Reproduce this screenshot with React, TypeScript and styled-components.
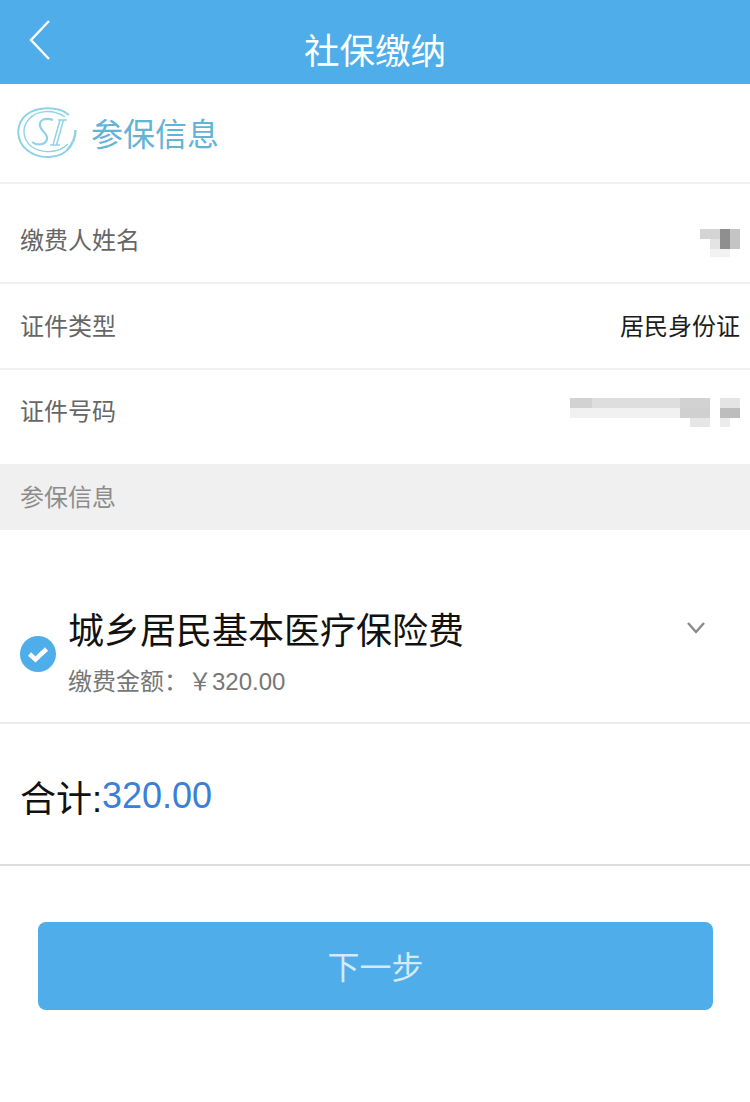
import styled, { createGlobalStyle } from "styled-components";

const GlobalStyle = createGlobalStyle`
  html, body {
    margin: 0;
    padding: 0;
    background: #fff;
  }
  body {
    font-family: "Liberation Sans", "Noto Sans CJK SC", sans-serif;
  }
`;

const Page = styled.div`
  width: 750px;
  height: 1102px;
  overflow: hidden;
  background: #fff;
`;

const Header = styled.header`
  position: relative;
  display: flex;
  align-items: center;
  justify-content: center;
  height: 84px;
  padding-top: 20px;
  box-sizing: border-box;
  background: #4fade9;
`;

const BackIcon = styled.svg`
  position: absolute;
  left: 28px;
  top: 19px;
`;

const Title = styled.h1`
  margin: 0;
  font-size: 35.5px;
  line-height: 40px;
  font-weight: 400;
  color: #fff;
`;

const Brand = styled.div`
  display: flex;
  align-items: center;
  gap: 14px;
  height: 100px;
  padding-left: 17px;
  box-sizing: border-box;
  border-bottom: 2px solid #f0f0f0;
`;

const BrandName = styled.span`
  font-size: 32px;
  color: #62b3d6;
  margin-bottom: 3px;
`;

const Row = styled.div<{ $height: number; $shift: number }>`
  display: flex;
  align-items: center;
  justify-content: space-between;
  height: ${(p) => p.$height}px;
  padding: ${(p) => Math.max(p.$shift, 0)}px 10px ${(p) => Math.max(-p.$shift, 0)}px 20px;
  box-sizing: border-box;
  border-bottom: 2px solid #f0f0f0;
`;

const Label = styled.span`
  font-size: 24px;
  color: #666;
`;

const Value = styled.span`
  font-size: 24px;
  color: #1c1c1c;
`;

const Blurred = styled.svg`
  margin-top: 9px;
  filter: blur(0.6px);
`;

const SectionBand = styled.div`
  display: flex;
  align-items: center;
  height: 64px;
  padding: 0 0 6px 20px;
  box-sizing: border-box;
  background: #f0f0f0;
  font-size: 24px;
  color: #8c8c8c;
`;

const Item = styled.div`
  display: flex;
  align-items: flex-start;
  height: 194px;
  padding: 77px 44px 0 20px;
  box-sizing: border-box;
  border-bottom: 2px solid #ececec;
`;

const CheckIcon = styled.svg`
  flex: none;
  margin-top: 29px;
`;

const ItemBody = styled.div`
  flex: 1;
  margin-left: 12px;
`;

const ItemName = styled.div`
  font-size: 36px;
  line-height: 50px;
  color: #111;
`;

const ItemPrice = styled.div`
  margin-top: 8px;
  font-size: 24px;
  line-height: 34px;
  color: #777;
`;

const Chevron = styled.svg`
  flex: none;
  margin-top: 14px;
`;

const Total = styled.div`
  display: flex;
  align-items: center;
  height: 142px;
  padding: 4px 0 0 20px;
  box-sizing: border-box;
  border-bottom: 2px solid #dedede;
  font-size: 36px;
  color: #111;
`;

const Amount = styled.span`
  color: #3a80d6;
`;

const NextButton = styled.button`
  display: block;
  width: 675px;
  height: 88px;
  margin: 56px 0 0 38px;
  padding: 0 0 2px;
  border: 0;
  border-radius: 8px;
  background: #4fade9;
  font-family: inherit;
  font-size: 32px;
  color: rgba(255, 255, 255, 0.75);
`;

type Block = readonly [number, number, number, number, string];

// pixelated blocks covering the name
const nameMosaic: readonly Block[] = [
  [0, 0, 20, 10, "#d4d4d4"],
  [10, 10, 10, 10, "#e4e4e4"],
  [20, 0, 10, 20, "#8f8f8f"],
  [30, 0, 10, 20, "#c4c4c4"],
  [10, 20, 20, 8, "#f2f2f2"],
];

const idMosaic: readonly Block[] = [
  [0, 0, 22, 10, "#d2d2d2"],
  [22, 0, 88, 10, "#dedede"],
  [0, 10, 110, 10, "#f1f1f1"],
  [110, 0, 30, 10, "#d2d2d2"],
  [110, 10, 30, 10, "#d0d0d0"],
  [120, 20, 20, 9, "#e6e6e6"],
  [150, 0, 20, 10, "#e4e4e4"],
  [150, 10, 20, 10, "#bdbdbd"],
  [150, 20, 10, 9, "#ececec"],
];

function Mosaic({ blocks, w, h }: { blocks: readonly Block[]; w: number; h: number }) {
  return (
    <Blurred width={w} height={h} viewBox={`0 0 ${w} ${h}`}>
      {blocks.map(([x, y, bw, bh, fill], i) => (
        <rect key={i} x={x} y={y} width={bw} height={bh} fill={fill} />
      ))}
    </Blurred>
  );
}

function App() {
  return (
    <Page>
      <GlobalStyle />
      <Header>
        <BackIcon width="24" height="44" viewBox="0 0 24 44" fill="none">
          <path d="M21 2 L3 21 L21 40" stroke="#fff" strokeWidth="2.4" />
        </BackIcon>
        <Title>社保缴纳</Title>
      </Header>
      <Brand>
        <svg width="60" height="54" viewBox="0 0 60 54" fill="none" stroke="#8fd3e4">
          <path d="M52 9 C42 0 20 0 9 9 C-2 19 -1 35 10 44 C22 54 44 54 54 40" strokeWidth="2" />
          <path d="M48 11 C36 3 20 4 12 13 C4 22 6 34 15 41 C26 48 42 47 51 38" strokeWidth="1.4" />
          <path d="M36 14 C28 11 22 14 23 20 C24 26 31 27 30 33 C29 39 20 40 15 36" strokeWidth="2.2" />
          <path d="M43 14 L36 39 M46.5 14 L39.5 39 M33 39 L43 39 M41 14 L50 14" strokeWidth="1.5" />
          <path d="M58.5 24 C58.5 32 56 38 50 44" strokeWidth="2.4" />
        </svg>
        <BrandName>参保信息</BrandName>
      </Brand>
      <Row $height={100} $shift={10}>
        <Label>缴费人姓名</Label>
        <Mosaic blocks={nameMosaic} w={40} h={28} />
      </Row>
      <Row $height={86} $shift={-4}>
        <Label>证件类型</Label>
        <Value>居民身份证</Value>
      </Row>
      <Row $height={96} $shift={-15}>
        <Label>证件号码</Label>
        <Mosaic blocks={idMosaic} w={170} h={32} />
      </Row>
      <SectionBand>参保信息</SectionBand>
      <Item>
        <CheckIcon width="36" height="36" viewBox="0 0 36 36">
          <circle cx="18" cy="18" r="18" fill="#4fade9" />
          <path d="M9.5 18 L15.5 23.5 L26.5 13" fill="none" stroke="#fff" strokeWidth="4.5" />
        </CheckIcon>
        <ItemBody>
          <ItemName>城乡居民基本医疗保险费</ItemName>
          <ItemPrice>缴费金额：￥320.00</ItemPrice>
        </ItemBody>
        <Chevron width="20" height="14" viewBox="0 0 20 14" fill="none">
          <path d="M2 2 L10 11 L18 2" stroke="#8a8a8a" strokeWidth="2.4" />
        </Chevron>
      </Item>
      <Total>
        合计:<Amount>320.00</Amount>
      </Total>
      <NextButton>下一步</NextButton>
    </Page>
  );
}

export default App;
